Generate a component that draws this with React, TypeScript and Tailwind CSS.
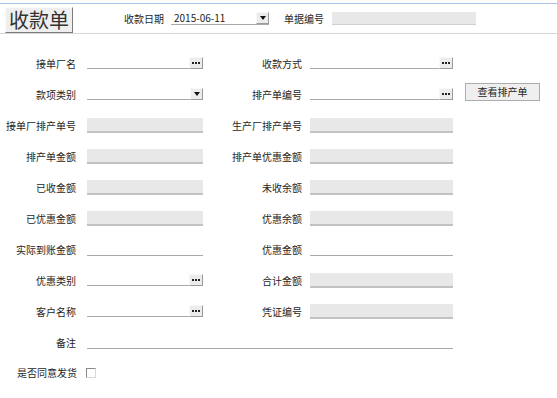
import React from 'react';

type Kind = 'line' | 'gray' | 'dots' | 'select';

const font = { fontFamily: '"Noto Sans CJK SC", "Noto Sans", sans-serif' };

function Dots() {
  return (
    <div className="flex h-[12px] w-[14px] shrink-0 items-center justify-center gap-[1px] border border-t-[#f8f8f8] border-l-[#f8f8f8] border-r-[#9a9a9a] border-b-[#9a9a9a] bg-[#ececec]">
      <span className="h-[2px] w-[2px] bg-[#222]" />
      <span className="h-[2px] w-[2px] bg-[#222]" />
      <span className="h-[2px] w-[2px] bg-[#222]" />
    </div>
  );
}

function Arrow() {
  return (
    <div className="flex h-[12px] w-[13px] shrink-0 flex-col items-center justify-center border border-t-[#f8f8f8] border-l-[#f8f8f8] border-r-[#9a9a9a] border-b-[#9a9a9a] bg-[#ececec]">
      <span className="h-0 w-0 border-l-[3px] border-r-[3px] border-t-[4px] border-l-transparent border-r-transparent border-t-[#111]" />
    </div>
  );
}

function Field({ kind }: { kind: Kind }) {
  if (kind === 'gray') {
    return <div className="h-[15px] w-full border-b-2 border-[#c2c2c2] bg-[#e8e8e8]" />;
  }
  if (kind === 'line') {
    return <div className="h-[12px] w-full border-b border-[#a9a9a9]" />;
  }
  return (
    <div className="mt-[-2px] flex h-[13px] w-full items-end">
      <div className="h-[12px] flex-1 border-b border-[#a9a9a9]" />
      {kind === 'dots' ? <Dots /> : <Arrow />}
    </div>
  );
}

type RowDef = {
  l: string;
  lk: Kind;
  r?: string;
  rk?: Kind;
  btn?: string;
};

const rows: RowDef[] = [
  { l: '接单厂名', lk: 'dots', r: '收款方式', rk: 'dots' },
  { l: '款项类别', lk: 'select', r: '排产单编号', rk: 'dots', btn: '查看排产单' },
  { l: '接单厂排产单号', lk: 'gray', r: '生产厂排产单号', rk: 'gray' },
  { l: '排产单金额', lk: 'gray', r: '排产单优惠金额', rk: 'gray' },
  { l: '已收金额', lk: 'gray', r: '未收余额', rk: 'gray' },
  { l: '已优惠金额', lk: 'gray', r: '优惠余额', rk: 'gray' },
  { l: '实际到账金额', lk: 'line', r: '优惠金额', rk: 'line' },
  { l: '优惠类别', lk: 'dots', r: '合计金额', rk: 'gray' },
  { l: '客户名称', lk: 'dots', r: '凭证编号', rk: 'gray' },
];

export default function App() {
  return (
    <div className="h-[398px] w-[557px] overflow-hidden bg-white pt-[3px] text-[10px] leading-none text-[#1e1e1e]" style={font}>
      {/* header strip */}
      <div className="flex h-[31px] items-center border-t border-b border-t-[#a8c4e4] border-b-[#d6d6d6]">
        <div className="ml-[5px] mt-[2px] flex h-[26px] w-[68px] items-center justify-center border border-t-[#fafafa] border-l-[#fafafa] border-r-[#7c7c7c] border-b-[#7c7c7c] bg-[#efefef] text-[20px] text-[#333]">
          收款单
        </div>
        <span className="ml-[51px]">收款日期</span>
        <div className="ml-[7px] flex h-[13px] w-[98px] items-end border-b border-[#a9a9a9]">
          <span className="mb-[1px] ml-[3px] flex-1">2015-06-11</span>
          <Arrow />
        </div>
        <span className="ml-[15px]">单据编号</span>
        <div className="ml-[8px] h-[13px] w-[144px] border-b border-[#d0d0d0] bg-[#e8e8e8]" />
      </div>

      <div className="mt-[14px] flex flex-col">
        {rows.map((r) => (
          <div key={r.l} className="flex h-[31px] items-center">
            <div className="w-[76px] text-right">{r.l}</div>
            <div className="ml-[11px] w-[116px]">
              <Field kind={r.lk} />
            </div>
            <div className="w-[99px] text-right">{r.r}</div>
            <div className="ml-[8px] w-[143px]">{r.rk && <Field kind={r.rk} />}</div>
            {r.btn && (
              <button className="ml-[12px] mt-[-6px] flex h-[18px] w-[75px] items-center justify-center border border-[#acacac] bg-[#efefef] text-[10px] text-[#1e1e1e]">
                {r.btn}
              </button>
            )}
          </div>
        ))}

        <div className="flex h-[31px] items-center">
          <div className="w-[76px] text-right">备注</div>
          <div className="ml-[11px] w-[366px]">
            <Field kind="line" />
          </div>
        </div>

        <div className="flex h-[30px] items-center">
          <div className="w-[77px] text-right">是否同意发货</div>
          <div className="ml-[9px] h-[10px] w-[10px] border border-t-[#8a8a8a] border-l-[#8a8a8a] border-r-[#d8d8d8] border-b-[#d8d8d8] bg-white" />
        </div>
      </div>
    </div>
  );
}
